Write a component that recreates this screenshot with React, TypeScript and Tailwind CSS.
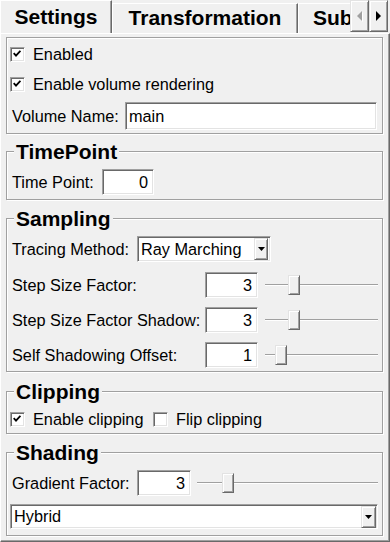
import React from "react";

const sunken =
  "border border-t-[#a0a0a0] border-l-[#a0a0a0] border-r-white border-b-white shadow-[inset_1px_1px_0_#696969,inset_-1px_-1px_0_#e3e3e3]";
const raised =
  "border border-t-[#e3e3e3] border-l-[#e3e3e3] border-r-[#696969] border-b-[#696969] shadow-[inset_1px_1px_0_#ffffff,inset_-1px_-1px_0_#a0a0a0] bg-[#f0f0f0]";
const groupBorder =
  "border border-[#a0a0a0] shadow-[inset_1px_1px_0_#ffffff,1px_1px_0_#ffffff]";

function Check({ checked }: { checked: boolean }) {
  return (
    <div
      className={`w-[15px] h-[15px] shrink-0 bg-white flex items-start justify-start pl-[2px] pt-[2px] ${sunken}`}
    >
      {checked && (
        <svg width="8" height="7" viewBox="0 0 8 7">
          <path d="M0.7 3.2L3 5.6L7.4 0.8" stroke="#000" strokeWidth="1.8" fill="none" />
        </svg>
      )}
    </div>
  );
}

function Group({
  title,
  className,
  children,
}: {
  title: string;
  className: string;
  children: React.ReactNode;
}) {
  return (
    <div className={`flex flex-col ${groupBorder} ${className}`}>
      <div className="-mt-[12px] ml-[7px] self-start bg-[#f0f0f0] px-[2px] h-[24px] leading-[24px] font-bold text-[21px]">
        {title}
      </div>
      {children}
    </div>
  );
}

function NumInput({ value, className }: { value: string; className: string }) {
  return (
    <div
      className={`shrink-0 h-[26px] bg-white flex items-center justify-end pr-[5px] ${sunken} ${className}`}
    >
      {value}
    </div>
  );
}

function Slider({ className, left }: { className: string; left: string }) {
  return (
    <div className={`flex items-center h-[20px] shrink-0 ${className}`}>
      <div className={`h-[2px] shrink-0 border-t border-t-[#a0a0a0] border-b border-b-white ${left}`} />
      <div className={`w-[12px] h-[20px] shrink-0 ${raised}`} />
      <div className="h-[2px] flex-1 border-t border-t-[#a0a0a0] border-b border-b-white" />
    </div>
  );
}

function Combo({ text, className, btn }: { text: string; className: string; btn: string }) {
  return (
    <div className={`flex items-center bg-white pl-[3px] ${sunken} ${className}`}>
      <span className="flex-1 whitespace-nowrap">{text}</span>
      <div className={`h-[22px] flex items-center justify-center shrink-0 ${raised} ${btn}`}>
        <svg width="7" height="4" viewBox="0 0 7 4">
          <path d="M0 0H7L3.5 4Z" fill="#000" />
        </svg>
      </div>
    </div>
  );
}

export default function App() {
  return (
    <div className="w-[390px] h-[542px] bg-[#f0f0f0] overflow-hidden flex flex-col text-black text-[16.3px] leading-[19px] font-['Liberation_Sans',Arial,sans-serif]">
      {/* Tab bar */}
      <div className="flex h-[33px] shrink-0 text-[21px] font-bold leading-[24px]">
        <div className="w-[112px] h-[33px] shrink-0 border-l border-t border-l-white border-t-white border-r border-r-[#696969] shadow-[inset_-1px_0_0_#a0a0a0] pt-[4px] text-center">
          Settings
        </div>
        <div className="w-[186px] h-[30px] mt-[3px] shrink-0 border-l border-t border-l-white border-t-white border-r border-r-[#696969] shadow-[inset_-1px_0_0_#a0a0a0] pt-[2px] text-center">
          Transformation
        </div>
        <div className="flex-1 min-w-0 h-[30px] mt-[3px] border-l border-t border-l-white border-t-white pt-[2px] pl-[14px] overflow-hidden whitespace-nowrap">
          Sub
        </div>
        <div className={`w-[19px] h-[32px] shrink-0 flex items-center justify-center ${raised}`}>
          <svg width="6" height="11" viewBox="0 0 6 11">
            <path d="M6 1V11L1 6Z" fill="#ffffff" />
            <path d="M5 0V10L0 5Z" fill="#a0a0a0" />
          </svg>
        </div>
        <div className={`w-[19px] h-[32px] shrink-0 flex items-center justify-center ${raised}`}>
          <svg width="5" height="10" viewBox="0 0 5 10">
            <path d="M0 0V10L5 5Z" fill="#000" />
          </svg>
        </div>
        <div className="w-[2px] shrink-0" />
      </div>

      {/* Panel */}
      <div className="h-[509px] flex flex-col border-t border-l border-t-white border-l-white border-r border-b border-r-[#696969] border-b-[#696969] shadow-[inset_-1px_-1px_0_#a0a0a0] pt-[3px] pl-[5px] pr-[6px] pb-[5px]">
        {/* General box */}
        <div className={`flex flex-col h-[97px] pt-[1px] pl-[3px] pr-[5px] ${groupBorder}`}>
          <div className="h-[30px] flex items-center">
            <Check checked />
            <span className="ml-[8px]">Enabled</span>
          </div>
          <div className="h-[30px] flex items-center">
            <Check checked />
            <span className="ml-[8px]">Enable volume rendering</span>
          </div>
          <div className="mt-[3px] h-[28px] flex items-center">
            <span className="pl-[2px]">Volume Name:</span>
            <div className={`ml-auto w-[252px] h-[28px] bg-white flex items-center pl-[3px] ${sunken}`}>
              main
            </div>
          </div>
        </div>

        <Group title="TimePoint" className="mt-[17px] pb-[4px]">
          <div className="mt-[5px] h-[26px] flex items-center pl-[5px]">
            <span className="w-[90px] shrink-0">Time Point:</span>
            <NumInput value="0" className="w-[52px]" />
          </div>
        </Group>

        <Group title="Sampling" className="mt-[18px] pb-[3px]">
          <div className="mt-[5px] h-[26px] flex items-center pl-[5px]">
            <span className="w-[125px] shrink-0">Tracing Method:</span>
            <Combo text="Ray Marching" className="w-[134px] h-[26px] pr-[2px]" btn="w-[14px]" />
          </div>
          <div className="mt-[10px] h-[26px] flex items-center pl-[5px]">
            <span className="w-[193px] shrink-0">Step Size Factor:</span>
            <NumInput value="3" className="w-[53px]" />
            <Slider className="ml-[7px] w-[113px]" left="w-[23px]" />
          </div>
          <div className="mt-[9px] h-[26px] flex items-center pl-[5px]">
            <span className="w-[193px] shrink-0 whitespace-nowrap">Step Size Factor Shadow:</span>
            <NumInput value="3" className="w-[53px]" />
            <Slider className="ml-[7px] w-[113px]" left="w-[23px]" />
          </div>
          <div className="mt-[9px] h-[26px] flex items-center pl-[5px]">
            <span className="w-[193px] shrink-0">Self Shadowing Offset:</span>
            <NumInput value="1" className="w-[53px]" />
            <Slider className="ml-[7px] w-[113px]" left="w-[10px]" />
          </div>
        </Group>

        <Group title="Clipping" className="mt-[19px] pb-[2px]">
          <div className="mt-[3px] h-[24px] flex items-center pl-[3px]">
            <div className="w-[143px] shrink-0 flex items-center">
              <Check checked />
              <span className="ml-[8px] whitespace-nowrap">Enable clipping</span>
            </div>
            <Check checked={false} />
            <span className="ml-[8px]">Flip clipping</span>
          </div>
        </Group>

        <Group title="Shading" className="mt-[18px] pb-[6px]">
          <div className="mt-[5px] h-[26px] flex items-center pl-[5px]">
            <span className="w-[125px] shrink-0">Gradient Factor:</span>
            <NumInput value="3" className="w-[54px]" />
            <Slider className="ml-[6px] w-[181px]" left="w-[25px]" />
          </div>
          <Combo text="Hybrid" className="mt-[8px] ml-[3px] w-[368px] h-[25px] pr-[1px]" btn="w-[15px]" />
        </Group>
      </div>
    </div>
  );
}
